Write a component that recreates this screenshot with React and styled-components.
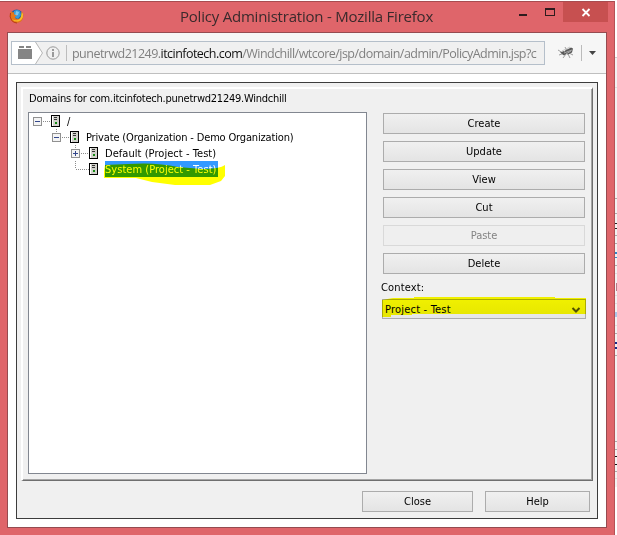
import React from "react";
import styled, { createGlobalStyle } from "styled-components";

const Global = createGlobalStyle`
  * { box-sizing: border-box; }
  html, body { margin: 0; background: #fff; overflow: hidden; }
`;

const Desktop = styled.div`
  display: flex;
  align-items: flex-start;
  width: 617px;
  height: 535px;
  padding-top: 1px;
  overflow: hidden;
  font: 11px/16px "DejaVu Sans Condensed", "DejaVu Sans", sans-serif;
  color: #000;
`;

const Window = styled.div`
  width: 615px;
  height: 534px;
  flex: none;
  background: #df656a;
  border-top: 1px solid #a84c50;
  border-right: 1px solid #b45256;
`;

const TitleBar = styled.header`
  display: flex;
  height: 30px;
  padding-left: 9px;
`;

const FirefoxIcon = styled.svg`
  flex: none;
  margin-top: 6px;
`;

const Title = styled.h1`
  width: 255px;
  margin: 0 0 0 156px;
  font: 400 15px/29px "Open Sans", "Noto Sans", sans-serif;
  letter-spacing: ${(p) => p.$tracking}px;
  color: #3a2a2c;
  white-space: nowrap;
`;

const WindowControls = styled.svg`
  flex: none;
  margin-left: 74px;
`;

const Client = styled.main`
  width: 600px;
  height: 496px;
  margin-left: 7px;
  background: #fff;
  border: 1px solid #954b50;
`;

const Toolbar = styled.nav`
  display: flex;
  height: 41px;
  padding: 8px 0 0 3px;
  background: #f6f6f6;
  border-bottom: 1px solid #bfbfbf;
`;

const UrlBox = styled.div`
  display: flex;
  flex: none;
  width: 534px;
  height: 24px;
  border: 1px solid #b5bfca;
  background: #f0f0f0;
`;

const Identity = styled.svg`
  flex: none;
`;

const UrlText = styled.div`
  width: 469px;
  margin-left: 4px;
  overflow: hidden;
  font: 12.5px/24px "Open Sans", "Noto Sans", sans-serif;
  letter-spacing: ${(p) => p.$tracking}px;
  white-space: nowrap;
  color: #808080;
  b { font-weight: 400; color: #111; }
`;

const Applet = styled.section`
  width: 582px;
  height: 437px;
  margin: 8px 0 0 8px;
  padding: 4px;
  background: #f0f0f0;
  border: 1px solid #3c3c3c;
`;

const Group = styled.div`
  width: 572px;
  height: 394px;
  padding-left: 5px;
  border-style: solid;
  border-width: 2px 1px 1px 2px;
  border-color: #fff #6f6f6f #6f6f6f #fff;
  box-shadow: inset -1px -1px #a5a5a5;
`;

const GroupTitle = styled.div`
  height: 23px;
  padding: 1px 0 0 1px;
  line-height: 17px;
  letter-spacing: ${(p) => p.$tracking}px;
  white-space: nowrap;
`;

const Columns = styled.div`
  display: flex;
`;

const Tree = styled.div`
  position: relative;
  width: 339px;
  height: 362px;
  padding: 0 0 0 4px;
  background: #fff;
  border: 1px solid #828790;
`;

const TreeRow = styled.div`
  display: flex;
  height: 16px;
  padding-left: ${(p) => p.$depth * 19}px;
`;

const NodeGlyph = styled.svg`
  flex: none;
`;

const Label = styled.span`
  height: 16px;
  margin-left: 2px;
  padding-right: ${(p) => (p.$selected ? 2 : 0)}px;
  line-height: 17px;
  letter-spacing: ${(p) => p.$tracking || 0}px;
  white-space: nowrap;
  background: ${(p) => (p.$selected ? "#3399ff" : "transparent")};
  color: ${(p) => (p.$selected ? "#fff" : "#000")};
`;

const Marker = styled.svg`
  position: absolute;
  left: ${(p) => p.$x}px;
  top: ${(p) => p.$y}px;
  mix-blend-mode: multiply;
  pointer-events: none;
`;

const Actions = styled.div`
  display: flex;
  flex-direction: column;
  gap: 7px;
  width: 204px;
  margin-left: 15px;
  padding-top: 1px;
`;

const Button = styled.button`
  width: ${(p) => p.$width}px;
  height: 21px;
  padding: 0;
  border: 1px solid ${(p) => (p.disabled ? "#d9d9d9" : "#acacac")};
  background: ${(p) => (p.disabled ? "#efefef" : "linear-gradient(#f0f0f0, #e4e4e4)")};
  color: ${(p) => (p.disabled ? "#838383" : "#000")};
  font: inherit;
  line-height: 19px;
`;

const ActionButton = styled(Button)`
  margin-left: 1px;
`;

const ContextLabel = styled.label`
  height: 16px;
  margin: -2px 0 0 -1px;
  line-height: 18px;
  letter-spacing: 0.15px;
`;

const Select = styled.div`
  position: relative;
  display: flex;
  justify-content: space-between;
  align-items: center;
  height: 20px;
  margin-top: -3px;
  padding: 2px 4px 0 2px;
  border: 1px solid #acacac;
  background: linear-gradient(#f0f0f0, #e5e5e5);
  letter-spacing: 0.2px;
`;

const Footer = styled.footer`
  display: flex;
  justify-content: flex-end;
  gap: 12px;
  padding: 10px 3px 0 0;
`;

const Backdrop = styled.aside`
  width: 2px;
  height: 534px;
  background: #fff;
`;

const Node = ({ expanded, first, last }) => (
  <NodeGlyph width="32" height="16" shapeRendering="crispEdges">
    <g stroke="#8c8c8c" strokeDasharray="1 1" fill="none">
      {!first && <path d="M4.5 0V8" />}
      {!last && <path d="M10 8.5H18" />}
      {last && <path d="M4.5 8.5H18" />}
    </g>
    {!last && (
      <g>
        <rect x="0" y="4" width="9" height="9" fill="#919191" />
        <rect x="1" y="5" width="7" height="7" fill="#f4f4f4" />
        <rect x="2" y="8" width="5" height="1" fill="#34488c" />
        {!expanded && <rect x="4" y="6" width="1" height="5" fill="#34488c" />}
      </g>
    )}
    <rect x="18" y="2" width="9" height="12" fill="#000" />
    <rect x="19" y="3" width="7" height="10" fill="#d2d2cc" />
    <rect x="19" y="3" width="1" height="10" fill="#fff" />
    <rect x="21" y="4" width="3" height="1" fill="#333" />
    <rect x="21" y="6" width="3" height="1" fill="#333" />
    <rect x="22" y="9" width="2" height="2" fill="#148a14" />
  </NodeGlyph>
);

const nodes = [
  { label: "/", depth: 0, expanded: true, first: true },
  { label: "Private (Organization - Demo Organization)", depth: 1, expanded: true, tracking: -0.16 },
  { label: "Default (Project - Test)", depth: 2, tracking: 0.05 },
  { label: "System (Project - Test)", depth: 2, last: true, selected: true, tracking: 0.03 },
];

const actions = ["Create", "Update", "View", "Cut", "Paste", "Delete"];

const edgeMarks = [
  [57, "#ccc"], [87, "#ddd"], [198, "#aaa"], [213, "#aaa"], [235, "#aaa"],
  [243, "#aaa"], [265, "#aaa"], [273, "#ddd"], [295, "#ddd"], [303, "#ddd"],
  [325, "#ddd"], [333, "#aaa"], [355, "#aaa"], [441, "#aaa"], [449, "#aaa"],
  [456, "#111"], [464, "#111"], [471, "#aaa"], [478, "#ddd"],
];

export default function App() {
  return (
    <>
      <Global />
      <Desktop>
        <Window>
          <TitleBar>
            <FirefoxIcon width="15" height="17" viewBox="0 0 15 17">
              <circle cx="7.7" cy="8" r="6.4" fill="#235aa0" />
              <path d="M5 3Q8 1 11 3L12 7 9 11 5 9Z" fill="#3a9ad8" />
              <path d="M7 3l3 1-1 3-3 1Z" fill="#7fc7ec" />
              <path d="M2 3Q-.5 8 2 12.2Q5 16 10 14.6Q15.4 12.2 14.2 5.5L12.6 3Q13.5 10 9.3 11Q6 11 5.8 8.8L8 7.6 5 6.2 4.8 3.7 3.6 4.5Z" fill="#e87818" />
              <path d="M14 6Q14.5 12 9 13.5Q5 14 3 11Q5 12.6 8 12.3Q12.5 11.5 12.6 4Z" fill="#f5bd28" />
              <path d="M1.5 5Q.3 9 2.7 12.5Q5 15 8 15" stroke="#b53b18" fill="none" />
            </FirefoxIcon>
            <Title $tracking={-0.22}>Policy Administration - Mozilla Firefox</Title>
            <WindowControls width="99" height="22">
              <path d="M10 12h8v2h-8z" fill="#2e1c1e" />
              <path d="M36 6h10v8H36zM37 8v5h8V8z" fill="#2e1c1e" fillRule="evenodd" />
              <rect x="54" y="0" width="45" height="20" fill="#c75050" />
              <path d="M73.5 7L80.5 14M80.5 7L73.5 14" stroke="#fff" strokeWidth="1.8" />
            </WindowControls>
          </TitleBar>
          <Client>
            <Toolbar>
              <UrlBox>
                <Identity width="56" height="22" viewBox="0 0 56 22">
                  <path d="M0 0H23L30 11 23 22H0Z" fill="#fff" />
                  <path d="M23.5 0L30.5 11 23.5 22" fill="none" stroke="#b8b8b8" />
                  <path d="M7 4h5v2H7zM14 4h5v2h-5zM6 7h14v10H6z" fill="#858585" />
                  <circle cx="41" cy="11" r="6.2" fill="none" stroke="#999" />
                  <path d="M40 7h2v2h-2zM40 10h2v5h-2z" fill="#999" />
                  <path d="M54.5 3V19" stroke="#bdbdbd" />
                </Identity>
                <UrlText $tracking={-0.53}>
                  punetrwd21249.<b>itcinfotech.com</b>/Windchill/wtcore/jsp/domain/admin/PolicyAdmin.jsp?c
                </UrlText>
              </UrlBox>
              <svg width="54" height="24">
                <g stroke="#777" fill="none" strokeWidth=".7">
                  <path d="M13 9l5 3M14 14l6-2M18 17l3-4M20 6l2 4M25 17l-2-4M28 14l-4-2" />
                </g>
                <path d="M15 11.5l4-1.5 3 2-3 2.5ZM20 9.5l6-3 2 1-1 4-4 2-3-1Z" fill="#5a5a5a" />
                <path d="M17 10l8-4M19 12l8-3M21 13l5-3" stroke="#bbb" strokeWidth=".8" />
                <path d="M36.5 4V20" stroke="#bbb" />
                <path d="M44 10h7l-3.5 4z" fill="#444" />
              </svg>
            </Toolbar>
            <Applet>
              <Group>
                <GroupTitle $tracking={-0.24}>Domains for com.itcinfotech.punetrwd21249.Windchill</GroupTitle>
                <Columns>
                  <Tree>
                    {nodes.map((n) => (
                      <TreeRow key={n.label} $depth={n.depth}>
                        <Node expanded={n.expanded} first={n.first} last={n.last} />
                        <Label $selected={n.selected} $tracking={n.tracking}>{n.label}</Label>
                      </TreeRow>
                    ))}
                    <Marker $x={74} $y={49} width="124" height="25">
                      <path d="M2 3L25 2Q53 0 75 5L99 7Q117 7 122 3V14L118 19 107 23H72L49 20 33 16H1V9Z" fill="#ff0" />
                    </Marker>
                  </Tree>
                  <Actions>
                    {actions.map((a) => (
                      <ActionButton key={a} $width={202} disabled={a === "Paste"}>{a}</ActionButton>
                    ))}
                    <ContextLabel>Context:</ContextLabel>
                    <Select>
                      Project - Test
                      <svg width="10" height="8">
                        <path d="M1.5 2L5 5.5 8.5 2" stroke="#505050" strokeWidth="2" fill="none" />
                      </svg>
                      <Marker $x={-1} $y={-3} width="204" height="20">
                        <path d="M0 3L11 1H32V0H173V1H204V17H30V18H9V20H0Z" fill="#ff0" />
                      </Marker>
                    </Select>
                  </Actions>
                </Columns>
              </Group>
              <Footer>
                <Button $width={111}>Close</Button>
                <Button $width={105}>Help</Button>
              </Footer>
            </Applet>
          </Client>
        </Window>
        <Backdrop>
          <svg width="2" height="534" shapeRendering="crispEdges">
            <rect y="56" width="2" height="430" fill="#f2f2f2" />
            {edgeMarks.map(([y, fill]) => (
              <rect key={y} y={y - 1} width="2" height="1" fill={fill} />
            ))}
            <path d="M0 222h2v1H0zM0 227h2v1H0z" fill="#222" />
            <path d="M0 251h2v2H0zM0 256h2v1H0z" fill="#3188c8" />
            <path d="M1 282h1v8H1z" fill="#b97886" />
            <path d="M0 311h2v5H0z" fill="#a9c6e8" />
            <path d="M0 341h2v2H0zM0 346h2v2H0z" fill="#182b88" />
          </svg>
        </Backdrop>
      </Desktop>
    </>
  );
}
